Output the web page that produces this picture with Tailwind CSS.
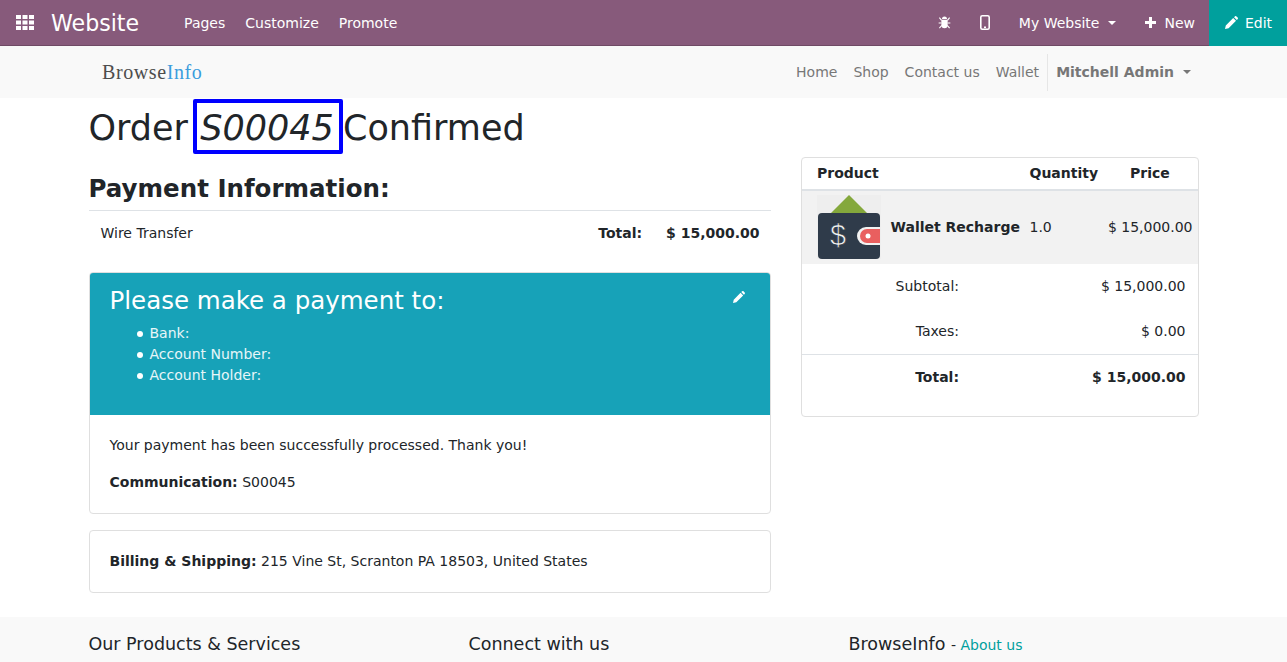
<!DOCTYPE html>
<html><head><meta charset="utf-8"><script src="https://cdn.jsdelivr.net/npm/@tailwindcss/browser@4"></script></head>
<body class="h-[662px] overflow-hidden bg-white font-['DejaVu_Sans',sans-serif] text-[14px] leading-[21px] text-[#212529]">
<header class="h-[46px] flex items-center bg-[#875a7b] border-b border-[#6f4a65] text-white">
  <svg class="ml-[16px] w-[18px] h-[16px]" viewBox="0 0 18 16" fill="#fff"><path d="M0 0h5v4H0zM6.500 0h5v4h-5zM13 0h5v4h-5zM0 5.500h5v4H0zM6.500 5.500h5v4h-5zM13 5.500h5v4h-5zM0 11h5v4H0zM6.500 11h5v4h-5zM13 11h5v4h-5z"/></svg>
  <span class="ml-[17px] pt-[2px] text-[22.1px]">Website</span>
  <nav class="ml-[45px] pt-[2px] flex gap-[20px]"><span>Pages</span><span>Customize</span><span>Promote</span></nav>
  <div class="ml-auto flex items-center h-full">
    <svg class="w-[13px] h-[13px] mr-[29px]" viewBox="0 0 14 14" fill="#fff"><path d="M4.300 3.200a2.700 2.700 0 0 1 5.400 0zM3.600 4h6.800v5.400a3.400 3.800 0 0 1-6.800 0z"/><path d="M1.500 1.700l2.300 3M12.500 1.700l-2.300 3M.7 7.500h3M10.300 7.500h3M1.500 13l2.600-2.800M12.500 13l-2.600-2.800" stroke="#fff" stroke-width="1.200" fill="none"/></svg>
    <svg class="w-[10px] h-[15px] mr-[29px]" viewBox="0 0 10 15"><rect x=".8" y=".8" width="8.400" height="13.400" rx="1.500" fill="none" stroke="#fff" stroke-width="1.600"/><rect x="4" y="11.500" width="2" height="1.600" fill="#fff"/></svg>
    <span class="pt-[2px]">My Website</span><span class="ml-[9px] border-x-[4px] border-t-[4px] border-x-transparent border-t-white"></span>
    <svg class="ml-[29px] w-[11px] h-[11px]" viewBox="0 0 11 11" fill="#fff"><path d="M4 0h3v4h4v3H7v4H4V7H0V4h4z"/></svg>
    <span class="ml-[8px] mr-[14px] pt-[2px]">New</span>
    <div class="h-[46px] w-[78px] bg-[#00a09d] flex items-center pl-[16px]">
      <svg class="w-[13px] h-[13px] mr-[7px]" viewBox="0 0 13 13" fill="#fff"><path d="M0 13l.8-3.600L8.200 2l2.800 2.800-7.400 7.400zM9 1.200l.8-.8a1.200 1.200 0 0 1 1.700 0l1.100 1.100a1.200 1.200 0 0 1 0 1.700l-.8.8z"/></svg><span class="pt-[2px]">Edit</span>
    </div>
  </div>
</header>
<div class="h-[52px] bg-[#f9f9f9] flex items-center pl-[102px]">
  <span class="font-['Liberation_Serif',serif] text-[20px] tracking-[.6px] text-[#4d4d4d]">Browse<span class="text-[#3b9ddd]">Info</span></span>
  <nav class="ml-auto flex items-center text-[#777]">
    <span>Home</span><span class="ml-[16px]">Shop</span><span class="ml-[16px]">Contact us</span><span class="ml-[16px]">Wallet</span>
    <span class="ml-[8px] w-px h-[37px] bg-[#e6e6e6]"></span>
    <b class="ml-[8px]">Mitchell Admin</b><span class="ml-[9px] border-x-[4px] border-t-[4px] border-x-transparent border-t-[#777]"></span>
    <span class="w-[96px]"></span>
  </nav>
</div>
<main class="w-[1110px] ml-[88.5px]">
  <h1 class="flex items-center text-[35px] leading-[42px] h-[56px]"><span class="pt-[4px]">Order</span><em class="ml-[5px] h-[55px] w-[150px] pt-[4px] pr-[2px] border-[4px] border-[#0000ff] rounded-[2px] flex items-center justify-center">S00045</em><span class="pt-[4px]">Confirmed</span></h1>
  <div class="flex gap-[30px] mt-[3px]">
    <section class="w-[682px]">
      <h3 class="mt-[17px] text-[24.5px] leading-[30px] font-bold">Payment Information:</h3>
      <div class="mt-[6px] h-[45px] border-t border-[#dee2e6] flex items-center pl-[12px] pr-[11px]">
        <span class="pt-[1px]">Wire Transfer</span><b class="ml-auto pt-[1px]">Total:</b><b class="ml-[24px] pt-[1px]">$ 15,000.00</b>
      </div>
      <article class="mt-[17px] h-[242px] border border-[#dfdfdf] rounded-[4px] overflow-hidden">
        <div class="relative h-[142px] bg-[#17a2b8] text-white/90 px-[20px] pt-[13px]">
          <h4 class="text-[24.5px] leading-[29px] text-white">Please make a payment to:</h4>
          <ul class="mt-[8px] ml-[27px]">
            <li class="flex items-center gap-[7px]"><span class="w-[6px] h-[6px] rounded-full bg-white"></span>Bank:</li>
            <li class="flex items-center gap-[7px]"><span class="w-[6px] h-[6px] rounded-full bg-white"></span>Account Number:</li>
            <li class="flex items-center gap-[7px]"><span class="w-[6px] h-[6px] rounded-full bg-white"></span>Account Holder:</li>
          </ul>
          <svg class="absolute right-[25px] top-[18px] w-[12px] h-[12px]" viewBox="0 0 13 13" fill="#fff"><path d="M0 13l.8-3.600L8.200 2l2.800 2.800-7.400 7.400zM9 1.200l.8-.8a1.200 1.200 0 0 1 1.700 0l1.100 1.100a1.200 1.200 0 0 1 0 1.700l-.8.8z"/></svg>
        </div>
        <div class="px-[20px] pt-[20px]">
          <p>Your payment has been successfully processed. Thank you!</p>
          <p class="mt-[16px]"><b>Communication:</b> S00045</p>
        </div>
      </article>
      <div class="mt-[16px] h-[63px] border border-[#dfdfdf] rounded-[4px] flex items-center px-[20px]">
        <p><b>Billing &amp; Shipping:</b> 215 Vine St, Scranton PA 18503, United States</p>
      </div>
    </section>
    <aside class="w-[398px] h-[260px] border border-[#dfdfdf] rounded-[4px] overflow-hidden">
      <div class="h-[33px] border-b-2 border-[#dee2e6] flex items-center font-bold">
        <span class="ml-[15.500px] w-[212.500px]">Product</span><span>Quantity</span><span class="ml-[32px]">Price</span>
      </div>
      <div class="h-[73px] bg-[#f2f2f2] flex items-center">
        <svg class="ml-[15px] mb-[1px] w-[64px] h-[64px]" viewBox="0 0 64 64"><rect width="64" height="64" fill="#eee"/><path d="M13 19L32 0l19 19z" fill="#84a83c"/><rect x="1" y="18" width="62" height="46" rx="4" fill="#2f3b4a"/><path d="M63 32H49a9 9 0 0 0 0 18h14z" fill="#f2f2f2"/><path d="M63 34H50a7 7 0 0 0 0 14h13z" fill="#e95f5f"/><circle cx="51" cy="41" r="2.500" fill="#fff"/><text x="21" y="50" text-anchor="middle" font-size="29" fill="#f2f2f2" stroke="#2f3b4a" stroke-width=".7" font-family="Liberation Sans">$</text></svg>
        <b class="ml-[10px]">Wallet Recharge</b><span class="ml-[9.500px]">1.0</span><span class="ml-auto mr-[5px]">$ 15,000.00</span>
      </div>
      <div class="flex h-[45px] items-center"><span class="w-[157.500px] text-right">Subtotal:</span><span class="ml-auto mr-[12px]">$ 15,000.00</span></div>
      <div class="flex h-[45px] items-center"><span class="w-[157.500px] text-right">Taxes:</span><span class="ml-auto mr-[12px]">$ 0.00</span></div>
      <div class="flex h-[46px] items-center border-t border-[#dee2e6] font-bold"><span class="w-[157.500px] text-right">Total:</span><span class="ml-auto mr-[12px]">$ 15,000.00</span></div>
    </aside>
  </div>
</main>
<footer class="mt-[24px] h-[60px] bg-[#f9f9f9] pl-[88.5px] pt-[17px] flex text-[17.5px]">
  <span class="w-[380px]">Our Products &amp; Services</span><span class="w-[380px]">Connect with us</span>
  <span>BrowseInfo <span class="text-[14px]">- <span class="text-[#00a09d]">About us</span></span></span>
</footer>
</body></html>
